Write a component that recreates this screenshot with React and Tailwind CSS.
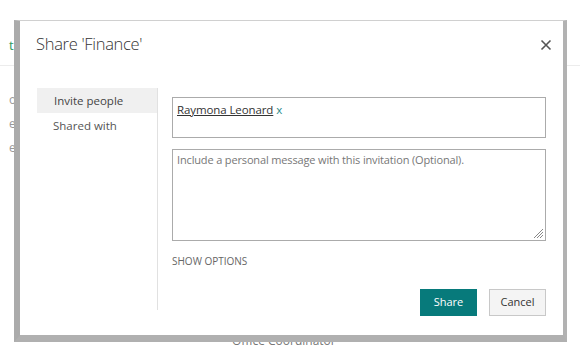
import React from "react";

export default function App() {
  return (
    <div
      className="relative w-[580px] h-[352px] bg-white overflow-hidden"
      style={{ fontFamily: '"Open Sans", "Noto Sans", sans-serif' }}
    >
      {/* background page */}
      <div className="flex flex-col">
        <div className="h-[66px] border-b border-[#ececec] pl-[9px] pt-[36px] text-[13px] text-[#2e9a5e]">
          t
        </div>
        <div className="flex flex-col pl-[9px] pt-[26px] gap-[8px] text-[12px] text-[#999] leading-[16px]">
          <span>o</span>
          <span>e</span>
          <span>e</span>
        </div>
        <div className="pl-[232px] pt-[176px] text-[12px] text-[#777]">Office Coordinator</div>
      </div>

      {/* dialog */}
      <div className="absolute left-[14px] top-[20px] w-[553px] h-[322px] border-t border-t-[#d0d0d0] border-l-[6px] border-l-[#ababab] border-r-[4px] border-r-[#b2b2b2] border-b-[7px] border-b-[#b0b0b0] bg-white flex flex-col">
        <div className="flex items-start justify-between pl-[16px] pr-[11px] pt-[10px]">
          <div className="text-[16.5px] leading-[26px] text-[#333] font-light tracking-[-0.3px]">
            Share 'Finance'
          </div>
          <svg width="12" height="12" viewBox="0 0 12 12" className="mt-[8px]">
            <path d="M1.5 1.5 L10.5 10.5 M10.5 1.5 L1.5 10.5" stroke="#555" strokeWidth="1.6" />
          </svg>
        </div>

        <div className="flex mt-[31px] pl-[17px]">
          <div className="w-[121px] h-[222px] border-r border-[#e1e1e1] flex flex-col text-[11.5px]">
            <div className="h-[25px] bg-[#f0f0f0] pl-[17px] flex items-center text-[#444]">Invite people</div>
            <div className="h-[25px] pl-[16px] flex items-center text-[#555]">Shared with</div>
          </div>

          <div className="pl-[14px] pt-[9px] w-[388px] flex flex-col">
            <div className="h-[41px] border border-[#ababab] px-[4px] pt-[3px] text-[11.5px] tracking-[-0.1px]">
              <span className="underline text-[#333]">Raymona Leonard</span>
              <span className="text-[#2a8a8a] ml-[3px]">x</span>
            </div>
            <div className="relative mt-[11px] h-[92px] border border-[#ababab] px-[4px] pt-[2px] text-[11px] tracking-[-0.15px] text-[#777]">
              Include a personal message with this invitation (Optional).
              <svg width="11" height="11" viewBox="0 0 11 11" className="absolute right-[1px] bottom-[1px]">
                <path d="M10 1 L1 10 M10 4 L4 10 M10 7 L7 10" stroke="#888" strokeWidth="1" />
              </svg>
            </div>
            <div className="mt-[12px] text-[10px] leading-[16px] text-[#666] tracking-[0px]">SHOW OPTIONS</div>
            <div className="mt-[20px] flex justify-end gap-[12px]">
              <button className="w-[57px] h-[27px] bg-[#077a7b] text-white text-[11px]">Share</button>
              <button className="w-[57px] h-[27px] bg-[#f4f4f4] border border-[#c8c8c8] text-[#333] text-[11px]">
                Cancel
              </button>
            </div>
          </div>
        </div>
      </div>
    </div>
  );
}
